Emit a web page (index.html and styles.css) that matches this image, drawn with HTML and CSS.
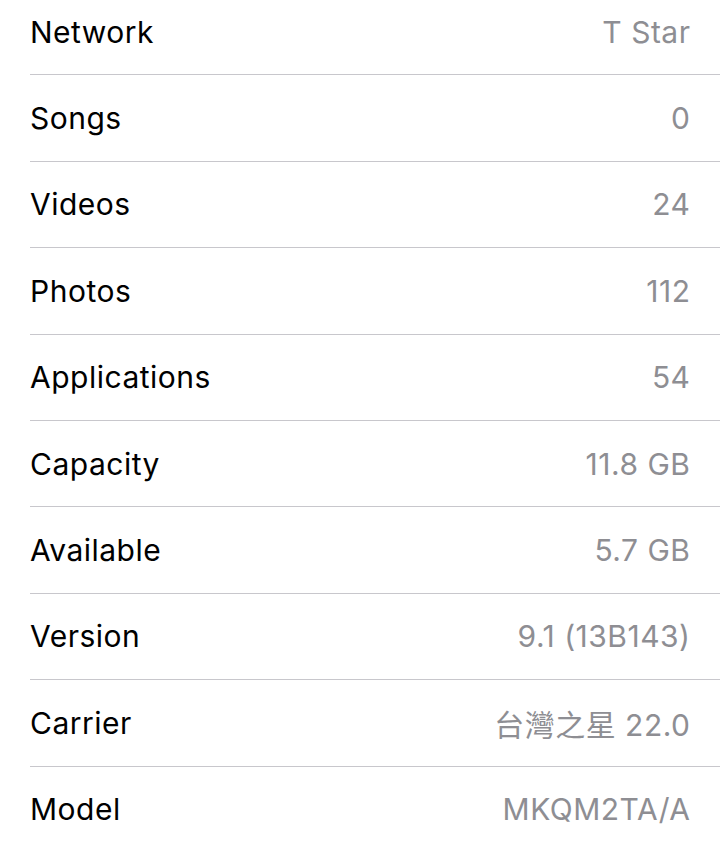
FILE: index.html
```html
<!DOCTYPE html>
<html>
<head>
    <title>About</title>
    <link rel="stylesheet" href="styles.css">
</head>
<body>
    <ul class="info-list">
        <li class="info-row"><span class="label">Network</span><span class="value">T Star</span></li>
        <li class="info-row"><span class="label">Songs</span><span class="value">0</span></li>
        <li class="info-row"><span class="label">Videos</span><span class="value">24</span></li>
        <li class="info-row"><span class="label">Photos</span><span class="value">112</span></li>
        <li class="info-row"><span class="label">Applications</span><span class="value">54</span></li>
        <li class="info-row"><span class="label">Capacity</span><span class="value">11.8 GB</span></li>
        <li class="info-row"><span class="label">Available</span><span class="value">5.7 GB</span></li>
        <li class="info-row"><span class="label">Version</span><span class="value">9.1 (13B143)</span></li>
        <li class="info-row"><span class="label">Carrier</span><span class="value">台灣之星 22.0</span></li>
        <li class="info-row last"><span class="label">Model</span><span class="value">MKQM2TA/A</span></li>
    </ul>
</body>
</html>
```

FILE: styles.css
```css
body {
    margin: 0;
    background: #ffffff;
    font-family: Inter, "Noto Sans CJK TC", sans-serif;
    overflow: hidden;
}

.info-list {
    list-style: none;
    margin: -11px 0 0 0;
    padding: 0 0 0 30px;
}

.info-row {
    display: flex;
    justify-content: space-between;
    align-items: center;
    height: 85.4px;
    padding-right: 30px;
    border-bottom: 1px solid #c8c7cc;
    font-size: 30px;
    letter-spacing: 0.5px;
}

.info-row.last {
    border-bottom: none;
}

.label {
    color: #000000;
}

.value {
    color: #8e8e93;
    margin-right: -0.5px;
}
```
